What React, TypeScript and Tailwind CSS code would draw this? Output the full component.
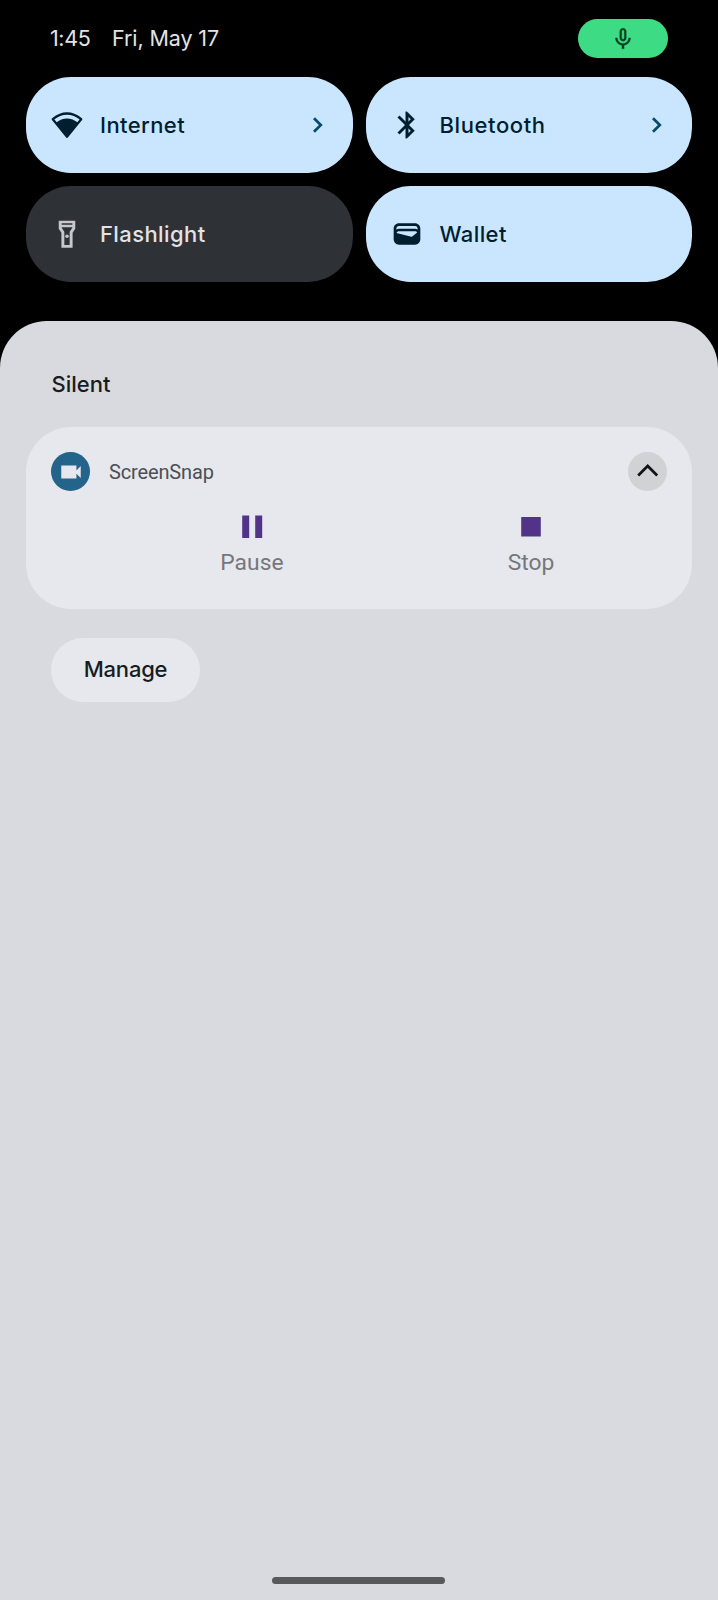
import type { ReactNode } from "react";

function WifiIcon() {
  return (
    <svg viewBox="0 0 32 32" className="size-8" fill="none">
      <path d="M1.8 10.2Q16-1.2 30.2 10.2L16 27.8Z" stroke="#001e2f" strokeWidth="2.2" strokeLinejoin="round" />
      <path d="M4.8 13.8Q16 5.2 27.2 13.8L16 28Z" fill="#001e2f" />
    </svg>
  );
}

function BluetoothIcon() {
  return (
    <svg viewBox="0 0 24 24" className="size-8" fill="#001e2f">
      <path d="M17.71 7.71 12 2h-1v7.59L6.41 5 5 6.41 10.59 12 5 17.59 6.41 19 11 14.41V22h1l5.71-5.71-4.3-4.29 4.3-4.29zM13 5.83l1.88 1.88L13 9.59V5.83zm1.88 10.46L13 18.17v-3.76l1.88 1.88z" stroke="#001e2f" strokeWidth=".2" />
    </svg>
  );
}

function FlashlightIcon() {
  return (
    <svg viewBox="0 0 24 24" className="size-8" fill="#c5c8cc">
      <path d="M5.8 2v6l2 3v11.4h8.4V11l2-3V2H5.8zM16 4v1H8V4h8zm-2 6.4V20.3h-4v-9.9l-2-3V7h8v.39L14 10.4z" />
      <circle cx="12" cy="13.7" r="1.3" />
    </svg>
  );
}

function WalletIcon() {
  return (
    <svg viewBox="0 0 24 24" className="size-8" fill="#001e2f">
      <path d="M18 4H6C3.79 4 2 5.79 2 8v8c0 2.21 1.79 4 4 4h12c2.21 0 4-1.79 4-4V8c0-2.21-1.79-4-4-4zm-1.86 9.77c-.24.2-.57.28-.88.2L4.15 11.25C4.45 10.52 5.16 10 6 10h12c.67 0 1.26.34 1.63.84l-3.49 2.93zM6 6h12c1.1 0 2 .9 2 2v.55C19.41 8.21 18.73 8 18 8H6c-.73 0-1.41.21-2 .55V8c0-1.1.9-2 2-2z" />
    </svg>
  );
}

function Tile({ icon, label, arrow, dark }: { icon: ReactNode; label: ReactNode; arrow?: boolean; dark?: boolean }) {
  return (
    <button
      className={`flex h-24 items-center rounded-[45px] pr-[29px] pl-[25px] text-left ${dark ? "bg-[#2e3135] text-[#e2e3e6]" : "bg-[#cae6ff] text-[#001e2f]"}`}
    >
      {icon}
      <span className="mb-px ml-[17px] flex-1 font-['Inter',sans-serif] text-[22px] leading-7 [font-weight:470]">{label}</span>
      {arrow && (
        <svg viewBox="0 0 12 18" className="h-[18px] w-3" fill="none" stroke="#064b6b" strokeWidth="2.7">
          <path d="m2 2.2 6.8 6.8L2 15.8" />
        </svg>
      )}
    </button>
  );
}

export default function App() {
  return (
    <main className="flex h-[1600px] w-[718px] flex-col bg-black font-['Roboto',sans-serif]">
      <header className="flex h-[77px] items-center px-[50px] text-[#e3e3e5]">
        <span className="w-[62px] font-['Inter',sans-serif] text-[21.5px] tracking-[-0.4px]">1:45</span>
        <span className="flex-1 font-['Inter',sans-serif] text-[21.5px] tracking-[-0.1px]">Fri, May 17</span>
        <div className="flex h-[39px] w-[90px] items-center justify-center rounded-full bg-[#3ddc84]">
          <svg viewBox="0 0 24 24" className="size-[26px]" fill="#0b3d20" stroke="#0b3d20" strokeWidth=".3">
            <path d="M12 14c1.66 0 3-1.34 3-3V5c0-1.66-1.34-3-3-3S9 3.34 9 5v6c0 1.66 1.34 3 3 3zm-1.2-9.1c0-.66.54-1.2 1.2-1.2s1.2.54 1.2 1.2v6.2c0 .66-.53 1.2-1.2 1.2s-1.2-.54-1.2-1.2V4.9zM17.2 11c0 3-2.54 5.1-5.2 5.1S6.8 14 6.8 11H5c0 3.41 2.72 6.23 6 6.72V21h2v-3.28c3.28-.49 6-3.31 6-6.72h-1.8z" />
          </svg>
        </div>
      </header>

      <section className="grid grid-cols-2 gap-[13px] px-[26px]">
        <Tile icon={<WifiIcon />} label={<span className="tracking-[0.4px]">Internet</span>} arrow />
        <Tile icon={<BluetoothIcon />} label={<span className="tracking-[0.6px]">Bluetooth</span>} arrow />
        <Tile icon={<FlashlightIcon />} label={<span className="tracking-[0.4px]">Flashlight</span>} dark />
        <Tile icon={<WalletIcon />} label={<span className="tracking-[0.4px]">Wallet</span>} />
      </section>

      <section className="mt-[39px] flex flex-1 flex-col rounded-t-[47px] bg-[#d9dadf] px-[26px] text-[#191c1f]">
        <h2 className="mt-[49px] ml-[25.5px] font-['Inter',sans-serif] text-[22px] leading-7 [font-weight:470]">Silent</h2>

        <article className="mt-[29px] h-[182px] rounded-[45px] bg-[#e6e8ed] px-[25px] pt-[25px]">
          <div className="flex h-[39px] items-center">
            <div className="flex size-[39px] items-center justify-center rounded-full bg-[#24638a]">
              <svg viewBox="0 0 24 24" className="size-[26px]" fill="#e6e8ed">
                <path d="M17 10.5V6H3v12h14v-4.5l4 4v-11l-4 4z" />
              </svg>
            </div>
            <span className="ml-[19px] flex-1 text-[20px] tracking-[-0.15px] text-[#4c4f54]">ScreenSnap</span>
            <button aria-label="Collapse" className="flex size-[39px] items-center justify-center rounded-full bg-[#d0d2d6]">
              <svg viewBox="0 0 24 16" className="h-4 w-6" fill="none" stroke="#101316" strokeWidth="2.7">
                <path d="m2.2 11.5 9.5-9.5 9.5 9.5" />
              </svg>
            </button>
          </div>
          <div className="ml-[61px] flex pt-[21.5px] text-[22.8px] text-[#75777b]">
            <button className="flex w-[280px] shrink-0 flex-col items-center">
              <svg viewBox="0 0 28 28" className="size-7" fill="#513488">
                <path d="M4.2 2.5h7v22.5h-7zM17.2 2.5h7v22.5h-7z" />
              </svg>
              <span className="mt-2 leading-7 tracking-[0.1px]">Pause</span>
            </button>
            <button className="flex w-[278px] shrink-0 flex-col items-center">
              <svg viewBox="0 0 28 28" className="size-7" fill="#513488">
                <path d="M4.2 4h19.6v19.6h-19.6z" />
              </svg>
              <span className="mt-2 leading-7">Stop</span>
            </button>
          </div>
        </article>

        <button className="mt-[29px] ml-[25px] h-16 w-[149px] rounded-full bg-[#e6e8ed] pb-px font-['Inter',sans-serif] text-[22px] tracking-[-0.2px] [font-weight:490]">Manage</button>

        <div className="mt-auto mb-4 ml-[246px] h-[7px] w-[173px] rounded-full bg-[#58595c]" />
      </section>
    </main>
  );
}
